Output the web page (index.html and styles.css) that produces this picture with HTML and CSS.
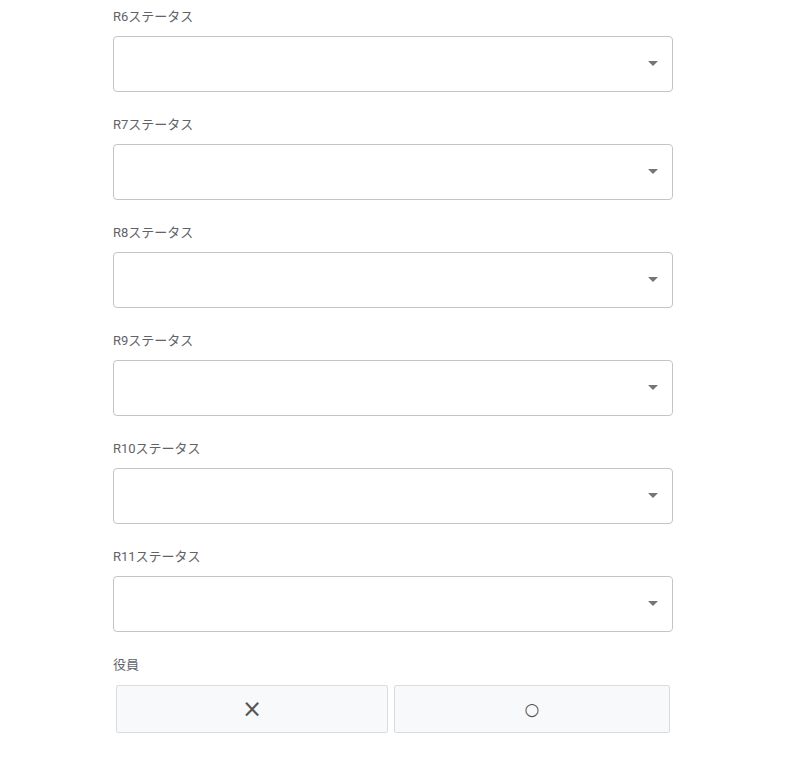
FILE: index.html
```html
<!DOCTYPE html>
<html lang="ja">
<head>
    <meta charset="UTF-8">
    <meta name="viewport" content="width=device-width, initial-scale=1.0">
    <title>ステータス</title>
    <link rel="stylesheet" href="styles.css">
</head>
<body>

    <div class="form">
        <div class="field">
            <label for="r6">R6ステータス</label>
            <div class="select-wrap">
                <select id="r6"><option value=""></option></select>
            </div>
        </div>

        <div class="field">
            <label for="r7">R7ステータス</label>
            <div class="select-wrap">
                <select id="r7"><option value=""></option></select>
            </div>
        </div>

        <div class="field">
            <label for="r8">R8ステータス</label>
            <div class="select-wrap">
                <select id="r8"><option value=""></option></select>
            </div>
        </div>

        <div class="field">
            <label for="r9">R9ステータス</label>
            <div class="select-wrap">
                <select id="r9"><option value=""></option></select>
            </div>
        </div>

        <div class="field">
            <label for="r10">R10ステータス</label>
            <div class="select-wrap">
                <select id="r10"><option value=""></option></select>
            </div>
        </div>

        <div class="field">
            <label for="r11">R11ステータス</label>
            <div class="select-wrap">
                <select id="r11"><option value=""></option></select>
            </div>
        </div>

        <div class="field field-last">
            <label>役員</label>
            <div class="toggle">
                <button type="button" class="btn-no">×</button>
                <button type="button" class="btn-yes">○</button>
            </div>
        </div>
    </div>

</body>
</html>
```

FILE: styles.css
```css
body {
    font-family: Roboto, "Noto Sans CJK JP", sans-serif;
    background-color: #ffffff;
    margin: 0;
    padding: 7px 0 0;
}
.form {
    width: 560px;
    margin-left: 113px;
}
.field {
    display: flex;
    flex-direction: column;
    margin-bottom: 23px;
}
.field-last {
    margin-bottom: 0;
}
label {
    display: block;
    height: 20px;
    font-size: 13px;
    line-height: 20px;
    color: #5f6368;
    margin-bottom: 9px;
    overflow: hidden;
}
.field-last label {
    margin-bottom: 10px;
}
.select-wrap {
    position: relative;
}
.select-wrap::after {
    content: "";
    position: absolute;
    right: 15px;
    top: 25px;
    border-left: 5px solid transparent;
    border-right: 5px solid transparent;
    border-top: 5px solid #757575;
    pointer-events: none;
}
select {
    appearance: none;
    -webkit-appearance: none;
    width: 100%;
    height: 56px;
    border: 1px solid #c4c4c4;
    border-radius: 4px;
    background-color: #ffffff;
    padding: 0 14px;
    font-size: 16px;
    margin: 0;
    display: block;
}
.toggle {
    display: flex;
    gap: 6px;
    padding: 0 3px;
}
.toggle button {
    height: 48px;
    padding: 0;
    background-color: #f8f9fa;
    border: 1px solid #dadce0;
    border-radius: 2px;
    font-family: "DejaVu Sans", sans-serif;
    color: #555555;
    line-height: 1;
    cursor: pointer;
}
.btn-no {
    flex: 272;
    font-size: 24px;
    padding-bottom: 2px;
}
.btn-yes {
    flex: 276;
    font-size: 17px;
    padding-bottom: 11px;
}
```
